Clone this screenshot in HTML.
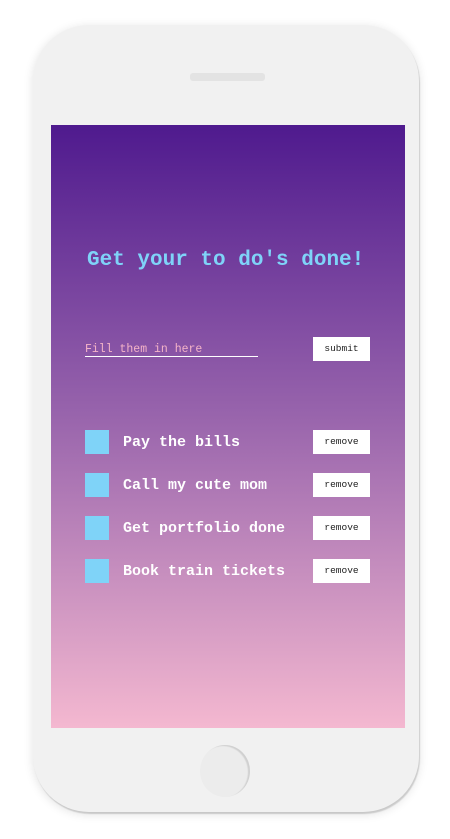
<!DOCTYPE html>
<html><head><style>
html,body{margin:0;padding:0;width:450px;height:839px;background:#fff;overflow:hidden}
body{position:relative;font-family:"Liberation Mono",monospace}
.phone{position:absolute;left:33px;top:25px;width:386px;height:787px;background:#f1f1f1;border-radius:56px;box-shadow:0 2px 10px rgba(0,0,0,0.12),1px 2px 1px rgba(0,0,0,0.15)}
.spk{position:absolute;left:190px;top:73px;width:75px;height:8px;background:#e3e3e3;border-radius:3px}
.home{position:absolute;left:200px;top:745px;width:50px;height:52px;border-radius:50%;background:#ececec;box-shadow:-2px 1px 1px #d0d0d0 inset}
.screen{position:absolute;left:51px;top:125px;width:354px;height:603px;background:linear-gradient(#4f1a8e,#9864ac 48%,#f4b8d0)}
.title{position:absolute;left:87px;top:249px;font-size:21px;font-weight:bold;color:#7fd3f8;white-space:nowrap}
.ph{position:absolute;left:85px;top:343px;font-size:11.5px;color:#f4b4c8;white-space:nowrap}
.line{position:absolute;left:85px;top:356px;width:173px;height:1px;background:#fff}
.btn{position:absolute;left:313px;width:57px;height:24px;background:#fff;font-size:9.5px;color:#222;text-align:center;line-height:24px}
.cb{position:absolute;left:85px;width:24px;height:24px;background:#7fd3f8}
.it{position:absolute;left:123px;font-size:15px;font-weight:bold;color:#fff;line-height:26px;white-space:nowrap}
</style></head><body>
<div class="phone"></div>
<div class="spk"></div>
<div class="home"></div>
<div class="screen"></div>
<div class="title">Get your to do's done!</div>
<div class="ph">Fill them in here</div>
<div class="line"></div>
<div class="btn" style="top:337px">submit</div>
<div class="cb" style="top:430px"></div><div class="it" style="top:430px">Pay the bills</div><div class="btn" style="top:430px">remove</div>
<div class="cb" style="top:473px"></div><div class="it" style="top:473px">Call my cute mom</div><div class="btn" style="top:473px">remove</div>
<div class="cb" style="top:516px"></div><div class="it" style="top:516px">Get portfolio done</div><div class="btn" style="top:516px">remove</div>
<div class="cb" style="top:559px"></div><div class="it" style="top:559px">Book train tickets</div><div class="btn" style="top:559px">remove</div>
</body></html>
